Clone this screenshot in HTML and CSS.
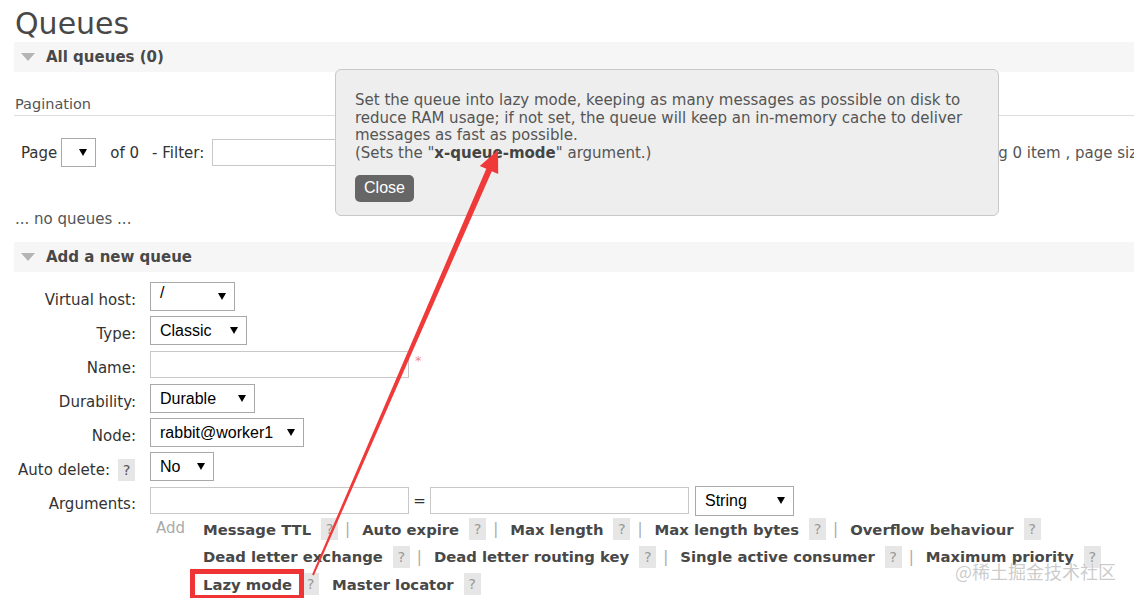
FILE: index.html
```html
<!DOCTYPE html>
<html lang="en">
<head>
  <meta charset="UTF-8" />
  <title>Queues</title>
  <link rel="stylesheet" href="styles.css">
</head>
<body>

<h1>Queues</h1>

<!-- All queues -->
<div class="section">
  <h2 class="section-title"><span class="toggle"></span>All queues (0)</h2>
  <h3 class="subhead">Pagination</h3>
  <div class="paging">
    <span class="page-label">Page</span>
    <div class="select sel-page"><span></span><i class="caret"></i></div>
    <span class="of">of 0</span>
    <span class="filter-label">- Filter:</span>
    <div class="input filter"></div>
    <span class="displaying">Displaying 0 item , page size up to: 100</span>
  </div>
  <p class="empty">... no queues ...</p>
</div>

<!-- Add a new queue -->
<div class="section">
  <h2 class="section-title"><span class="toggle"></span>Add a new queue</h2>
  <div class="form">
    <label>Virtual host:</label>
    <div class="field"><div class="select w-vhost"><span class="vhost">/</span><i class="caret"></i></div></div>

    <label>Type:</label>
    <div class="field"><div class="select w-type"><span>Classic</span><i class="caret"></i></div></div>

    <label>Name:</label>
    <div class="field"><div class="input w-name"></div><span class="mand">*</span></div>

    <label>Durability:</label>
    <div class="field"><div class="select w-dur"><span>Durable</span><i class="caret"></i></div></div>

    <label>Node:</label>
    <div class="field"><div class="select w-node"><span>rabbit@worker1</span><i class="caret"></i></div></div>

    <label>Auto delete:<span class="help dark">?</span></label>
    <div class="field"><div class="select w-auto"><span>No</span><i class="caret"></i></div></div>

    <label>Arguments:</label>
    <div class="field">
      <div class="input w-name"></div>
      <span class="eq">=</span>
      <div class="input w-val"></div>
      <div class="select w-str"><span>String</span><i class="caret"></i></div>
    </div>
  </div>

  <div class="add-args">
    <span class="add">Add</span>
    <div class="arg-links">
      <div class="arg-row">
        <span class="arg">Message TTL</span><span class="help">?</span><span class="sep">|</span>
        <span class="arg">Auto expire</span><span class="help">?</span><span class="sep">|</span>
        <span class="arg">Max length</span><span class="help">?</span><span class="sep">|</span>
        <span class="arg">Max length bytes</span><span class="help">?</span><span class="sep">|</span>
        <span class="arg">Overflow behaviour</span><span class="help">?</span>
      </div>
      <div class="arg-row">
        <span class="arg">Dead letter exchange</span><span class="help">?</span><span class="sep">|</span>
        <span class="arg">Dead letter routing key</span><span class="help">?</span><span class="sep">|</span>
        <span class="arg">Single active consumer</span><span class="help">?</span><span class="sep">|</span>
        <span class="arg">Maximum priority</span><span class="help">?</span>
      </div>
      <div class="arg-row">
        <span class="arg lazy">Lazy mode</span><span class="help">?</span>
        <span class="arg">Master locator</span><span class="help">?</span>
      </div>
    </div>
  </div>
</div>

<!-- help popup -->
<div class="popup">
  <p>Set the queue into lazy mode, keeping as many messages as possible on disk to<br>
  reduce RAM usage; if not set, the queue will keep an in-memory cache to deliver<br>
  messages as fast as possible.<br>
  (Sets the "<b>x-queue-mode</b>" argument.)</p>
  <button class="close">Close</button>
</div>

<!-- annotation arrow -->
<svg class="arrow" width="1134" height="598" viewBox="0 0 1134 598">
  <polygon fill="#f03a3a" points="312.1,574.6 486.3,168.8 479.8,166 498,150 498.2,174 491.8,171.2 313.9,575.4"/>
</svg>

<div class="watermark">@稀土掘金技术社区</div>

</body>
</html>
```

FILE: styles.css
```css
/* Base */
body {
  margin: 0;
  padding: 0 0 0 14px;
  font-family: "DejaVu Sans", Verdana, sans-serif;
  font-size: 15px;
  color: #484848;
  background: #fff;
  overflow: hidden;
  position: relative;
  height: 598px;
}

h1 {
  margin: 0;
  padding: 6px 0 0 1px;
  font-size: 30px;
  line-height: 35px;
  font-weight: normal;
  color: #484848;
  height: 36px;
}

/* Section headers */
.section-title {
  margin: 0;
  height: 30px;
  background: #f6f6f6;
  font-size: 15px;
  font-weight: bold;
  color: #484848;
  padding-left: 7px;
  display: flex;
  align-items: center;
}

.toggle {
  width: 0;
  height: 0;
  border-left: 7px solid transparent;
  border-right: 7px solid transparent;
  border-top: 8px solid #b4b4b4;
  margin-right: 11px;
}

.subhead {
  margin: 22px 0 0;
  padding: 0 0 1px 1px;
  font-size: 14.5px;
  line-height: 20px;
  font-weight: normal;
  color: #555;
  border-bottom: 1px solid #ddd;
}

/* Pagination row */
.paging {
  display: flex;
  align-items: center;
  margin-top: 22px;
  height: 29px;
  padding-left: 7px;
  color: #333;
  white-space: nowrap;
}

.paging > * { flex-shrink: 0; }

.sel-page { width: 35px; margin-left: 4px; }
.of { margin-left: 14px; }
.filter-label { margin-left: 13px; }
.filter { width: 290px; height: 27px; margin-left: 8px; }
.displaying { margin-left: 427px; color: #555; }

.empty {
  margin: 42px 0 0 1px;
  line-height: 20px;
  color: #555;
}

.section + .section { margin-top: 13px; }

/* Form controls */
.select {
  box-sizing: border-box;
  height: 29px;
  border: 1px solid #a9a9a9;
  background: #fff;
  display: flex;
  align-items: center;
  justify-content: space-between;
  padding: 0 8px 0 9px;
  font-family: "Liberation Sans", Arial, sans-serif;
  font-size: 16px;
  color: #000;
}

.caret {
  width: 0;
  height: 0;
  border-left: 4px solid transparent;
  border-right: 4px solid transparent;
  border-top: 7px solid #000;
}

.input {
  box-sizing: border-box;
  height: 27px;
  border: 1px solid #c8c8c8;
  background: #fff;
}

.form {
  display: grid;
  grid-template-columns: 122px 1fr;
  grid-auto-rows: 34px;
  column-gap: 14px;
  margin-top: 7.5px;
}

.form label {
  display: flex;
  align-items: center;
  justify-content: flex-end;
  padding-top: 6px;
  color: #333;
}

.field {
  display: flex;
  align-items: center;
}

.w-vhost { width: 85px; }
.w-type { width: 97px; }
.w-name { width: 259px; }
.w-dur { width: 105px; }
.w-node { width: 154px; }
.w-auto { width: 64px; }
.w-val { width: 259px; }
.w-str { width: 99px; margin-left: 6px; height: 30px; }

.vhost { margin-top: -8px; }

.mand {
  color: #e88;
  font-size: 13px;
  margin: -8px 0 0 6px;
}

.eq {
  width: 21px;
  text-align: center;
  color: #333;
}

/* Help boxes */
.help {
  display: inline-block;
  width: 17px;
  height: 22px;
  line-height: 22px;
  text-align: center;
  background: #e6e6e6;
  color: #999;
  font-size: 14.5px;
  font-weight: normal;
  margin-left: 10px;
  vertical-align: middle;
}

.help.dark {
  color: #555;
  margin-left: 8px;
  margin-right: 1px;
}

/* Optional arguments */
.add-args {
  display: flex;
  margin: -2px 0 0 136px;
}

.add {
  width: 47px;
  padding-left: 6px;
  color: #aaa;
  line-height: 25px;
}

.arg-row {
  height: 27.5px;
  display: flex;
  align-items: center;
  white-space: nowrap;
}

.arg {
  font-size: 14.8px;
  font-weight: bold;
  color: #484848;
}

.sep {
  color: #aaa;
  margin: 0 12px 0 7px;
}

.arg-row .help + .arg { margin-left: 13px; }

.lazy { position: relative; }

.lazy::after {
  content: "";
  position: absolute;
  left: -13px;
  right: -12px;
  top: -7px;
  bottom: -7px;
  border: 5px solid #ee3434;
}

/* Help popup */
.popup {
  position: absolute;
  left: 335px;
  top: 69px;
  width: 624px;
  height: 107px;
  padding: 22px 19px 16px;
  background: #eee;
  border: 1px solid #c8c8c8;
  border-radius: 6px;
  color: #555;
}

.popup p {
  margin: 0;
  line-height: 17.7px;
}

.popup b { color: #444; }

.close {
  margin-top: 12px;
  width: 59px;
  height: 27px;
  border: none;
  border-radius: 5px;
  background: #666;
  color: #fff;
  font-family: "Liberation Sans", Arial, sans-serif;
  font-size: 16px;
  padding: 0;
}

/* Annotation */
.arrow {
  position: absolute;
  left: 0;
  top: 0;
  pointer-events: none;
}

.watermark {
  position: absolute;
  left: 955px;
  top: 558px;
  font-family: "Noto Sans CJK SC", sans-serif;
  font-size: 18px;
  color: rgba(160, 160, 160, 0.55);
  text-shadow: 0 0 2px #fff;
  white-space: nowrap;
}
```
